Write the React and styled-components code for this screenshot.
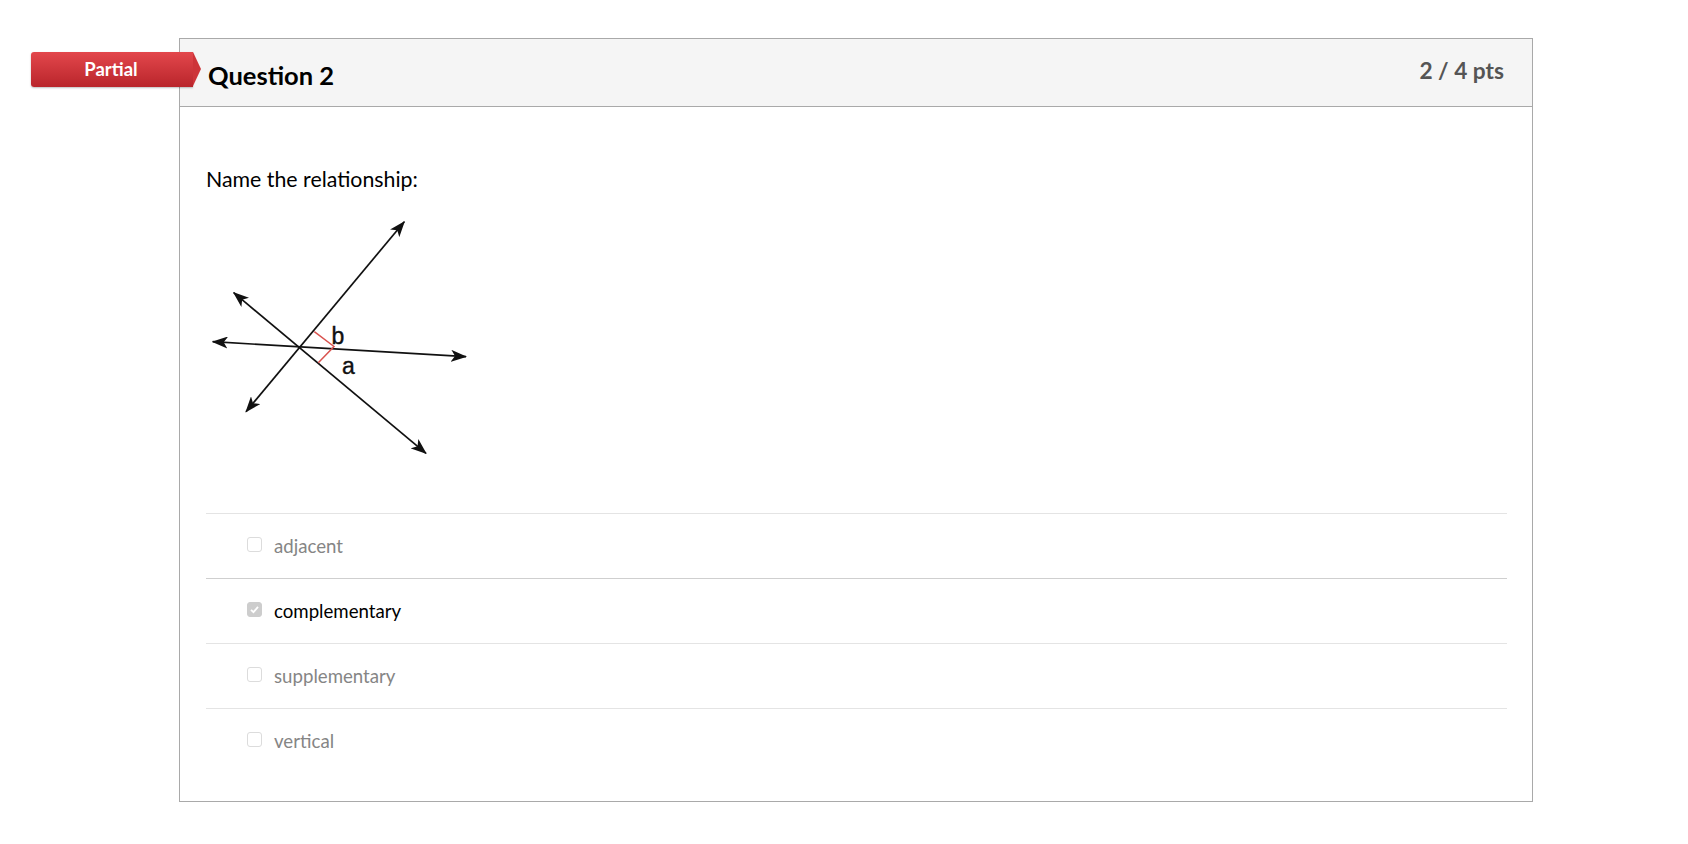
import React from "react";
import styled, { createGlobalStyle } from "styled-components";

const Global = createGlobalStyle`
  html, body { margin: 0; padding: 0; background: #fff; }
  body { font-family: Lato, "Noto Sans", sans-serif; color: #000; }
`;

const Page = styled.div`
  padding: 38px 0 0 179px;
`;

const Card = styled.div`
  position: relative;
  width: 1354px;
  box-sizing: border-box;
  border: 1px solid #a9a9a9;
  background: #fff;
`;

const Badge = styled.div`
  position: absolute;
  left: -149px;
  top: 13px;
  width: 162px;
  height: 35px;
  box-sizing: border-box;
  padding: 0 2px 2px 0;
  background: linear-gradient(#e3474c, #b9252b);
  border-radius: 3px 0 0 3px;
  box-shadow: 0 1px 2px rgba(0,0,0,0.25);
  color: #fff;
  font-weight: 700;
  font-size: 18.5px;
  display: flex;
  align-items: center;
  justify-content: center;
  &::after {
    content: "";
    position: absolute;
    right: -8px;
    top: 0;
    border-left: 8px solid #cd3439;
    border-top: 17.5px solid transparent;
    border-bottom: 17.5px solid transparent;
  }
`;

const Header = styled.div`
  height: 68px;
  box-sizing: border-box;
  background: #f5f5f5;
  border-bottom: 1px solid #a9a9a9;
  display: flex;
  justify-content: space-between;
  align-items: flex-start;
  padding: 18px 28px 0 28px;
`;

const Title = styled.div`
  margin-top: 3px;
  font-weight: 700;
  font-size: 25.5px;
  line-height: 1.2;
`;

const Points = styled.div`
  font-weight: 700;
  font-size: 22.7px;
  line-height: 1.2;
  color: #555;
`;

const Body = styled.div`
  padding: 60px 25px 28px 26px;
`;

const QuestionText = styled.p`
  margin: 0;
  font-size: 21.33px;
  line-height: 25.5px;
`;

const Figure = styled.div`
  margin: 22px 0 0 0;
  height: 245px;
  display: flex;
`;

const Answers = styled.div`
  margin-top: 53px;
`;

const Row = styled.div`
  height: 65px;
  box-sizing: border-box;
  border-top: 1px solid ${p => (p.$selected ? "#cfcfcf" : "#e4e4e4")};
  display: flex;
  align-items: center;
  padding-left: 41px;
  gap: 12px;
  font-size: 18.67px;
  color: ${p => (p.$selected ? "#000" : "#858585")};
`;

const Box = styled.span`
  width: 15px;
  height: 15px;
  flex: none;
  box-sizing: border-box;
  border: 1px solid ${p => (p.$checked ? "#cdcdcd" : "#dcdcdc")};
  border-radius: 3px;
  background: ${p => (p.$checked ? "#cdcdcd" : "#fff")};
  display: flex;
  align-items: center;
  justify-content: center;
  margin-top: -2px;
`;

function Diagram() {
  return (
    <svg width="265" height="245" viewBox="205 215 265 245">
      <defs>
        <marker id="arr" viewBox="0 0 16 12" refX="15" refY="6" markerWidth="16" markerHeight="12" markerUnits="userSpaceOnUse" orient="auto-start-reverse">
          <path d="M0,0 L16,6 L0,12 L4,6 Z" fill="#111" />
        </marker>
      </defs>
      <g stroke="#111" strokeWidth="1.7" fill="none">
        <line x1="245" y1="411.7" x2="403.3" y2="221.7" markerStart="url(#arr)" markerEnd="url(#arr)" />
        <line x1="232.7" y1="292.7" x2="425" y2="453.3" markerStart="url(#arr)" markerEnd="url(#arr)" />
        <line x1="211.7" y1="341.7" x2="465" y2="356.7" markerStart="url(#arr)" markerEnd="url(#arr)" />
      </g>
      <polyline points="313.3,331.7 333,346.5 317.3,362.7" fill="none" stroke="#d9534f" strokeWidth="1.5" />
      <text x="330.5" y="343.5" fontFamily="Liberation Sans, Arial, sans-serif" fontSize="23" fill="#111" stroke="#111" strokeWidth="0.4">b</text>
      <text x="341" y="374" fontFamily="Liberation Sans, Arial, sans-serif" fontSize="23" fill="#111" stroke="#111" strokeWidth="0.4">a</text>
    </svg>
  );
}

const answers = [
  { label: "adjacent", selected: false },
  { label: "complementary", selected: true },
  { label: "supplementary", selected: false },
  { label: "vertical", selected: false },
];

export default function App() {
  return (
    <>
      <Global />
      <Page>
        <Card>
          <Badge>Partial</Badge>
          <Header>
            <Title>Question 2</Title>
            <Points>2 / 4 pts</Points>
          </Header>
          <Body>
            <QuestionText>Name the relationship:</QuestionText>
            <Figure>
              <Diagram />
            </Figure>
            <Answers>
              {answers.map(a => (
                <Row key={a.label} $selected={a.selected}>
                  <Box $checked={a.selected}>
                    {a.selected && (
                      <svg width="11" height="11" viewBox="0 0 11 11">
                        <path d="M2 5.8 L4.5 8.2 L9 2.8" stroke="#fff" strokeWidth="1.8" fill="none" />
                      </svg>
                    )}
                  </Box>
                  <span>{a.label}</span>
                </Row>
              ))}
            </Answers>
          </Body>
        </Card>
      </Page>
    </>
  );
}
